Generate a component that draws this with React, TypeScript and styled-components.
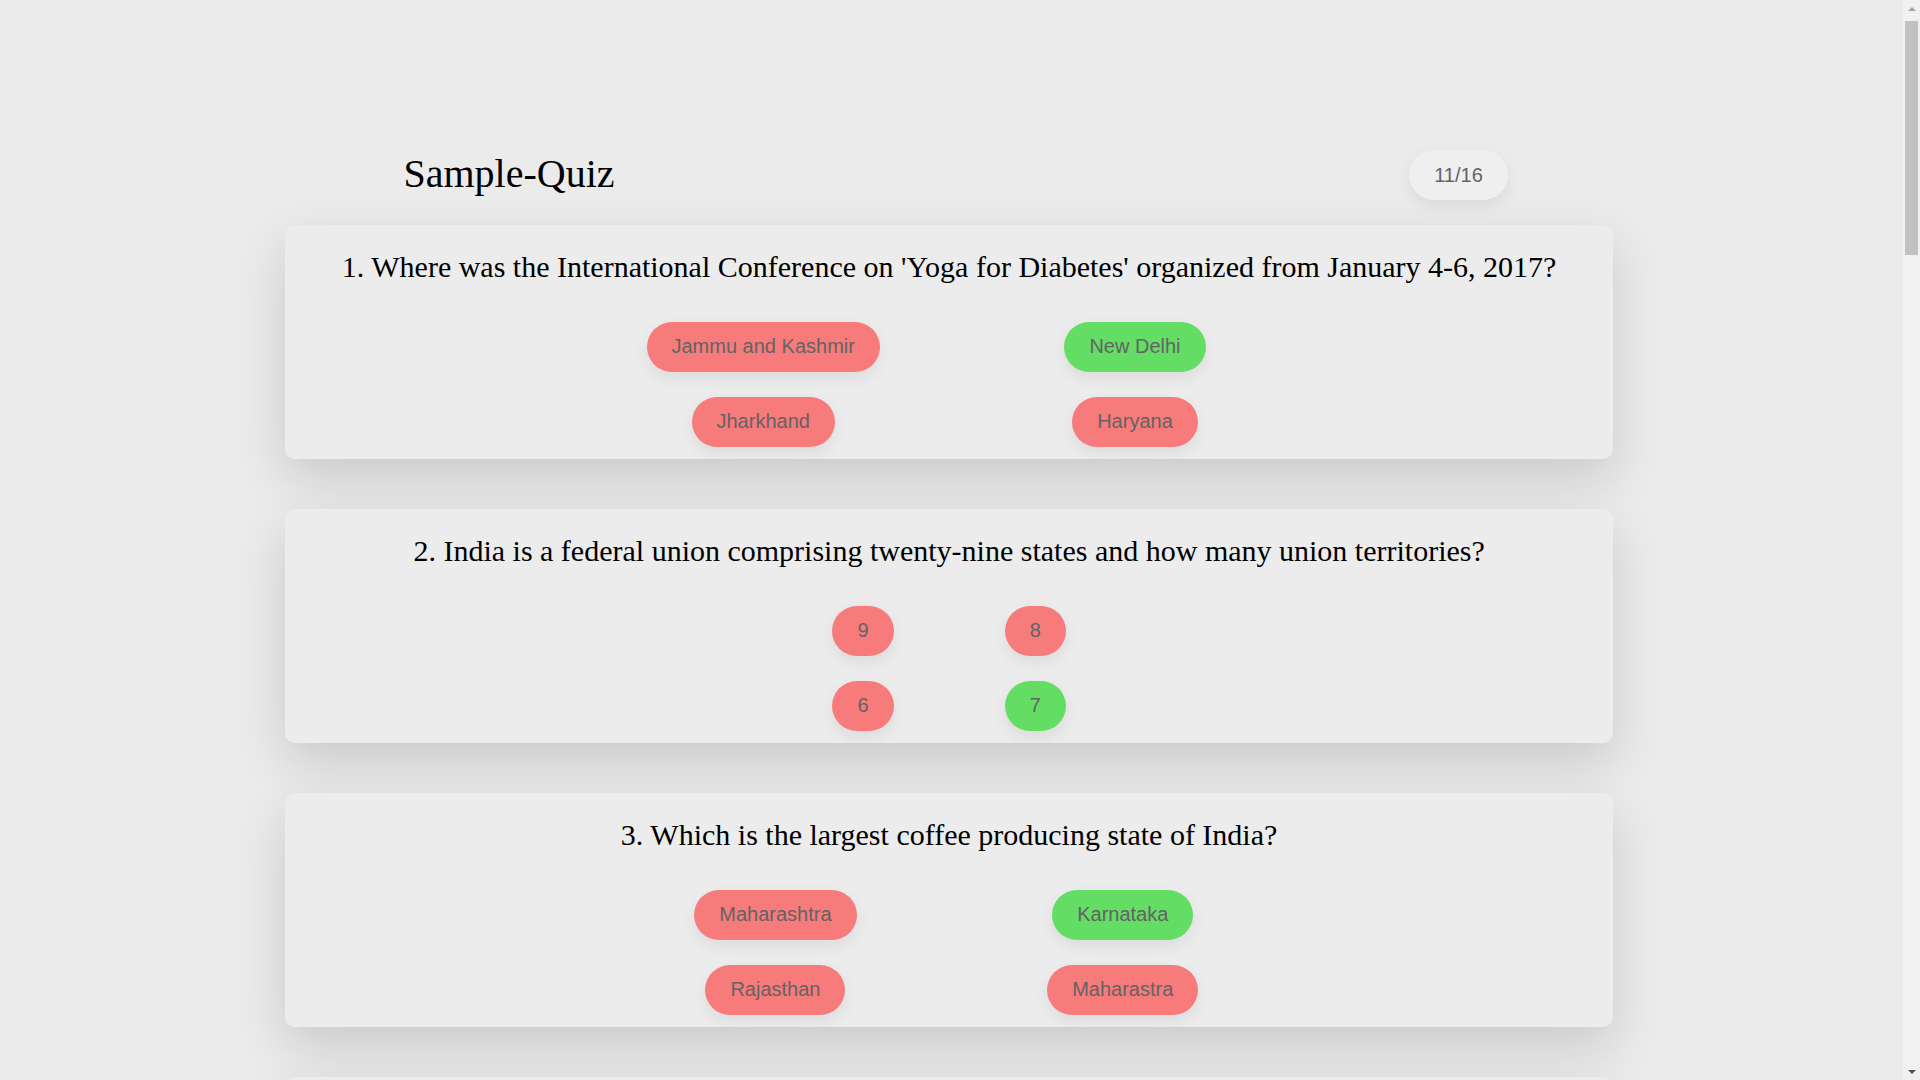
import React from "react";
import styled, { createGlobalStyle } from "styled-components";

type Question = {
  text: string;
  options: string[];
  answer: string;
};

const questions: Question[] = [
  {
    text: "Where was the International Conference on 'Yoga for Diabetes' organized from January 4-6, 2017?",
    options: ["Jammu and Kashmir", "New Delhi", "Jharkhand", "Haryana"],
    answer: "New Delhi",
  },
  {
    text: "India is a federal union comprising twenty-nine states and how many union territories?",
    options: ["9", "8", "6", "7"],
    answer: "7",
  },
  {
    text: "Which is the largest coffee producing state of India?",
    options: ["Maharashtra", "Karnataka", "Rajasthan", "Maharastra"],
    answer: "Karnataka",
  },
  {
    text: "Which is the smallest state of India by area?",
    options: ["Goa", "Sikkim", "Tripura", "Mizoram"],
    answer: "Goa",
  },
  {
    text: "Which river is known as the Ganga of the South?",
    options: ["Krishna", "Kaveri", "Godavari", "Narmada"],
    answer: "Godavari",
  },
  {
    text: "Who was the first President of India?",
    options: ["Rajendra Prasad", "S. Radhakrishnan", "Zakir Husain", "V. V. Giri"],
    answer: "Rajendra Prasad",
  },
  {
    text: "Which is the national aquatic animal of India?",
    options: ["Dolphin", "Crocodile", "Turtle", "Shark"],
    answer: "Dolphin",
  },
  {
    text: "Which state has the longest coastline in India?",
    options: ["Gujarat", "Kerala", "Tamil Nadu", "Odisha"],
    answer: "Gujarat",
  },
  {
    text: "In which year did India win its first Cricket World Cup?",
    options: ["1983", "1987", "2011", "1975"],
    answer: "1983",
  },
  {
    text: "Which city is known as the Silicon Valley of India?",
    options: ["Hyderabad", "Bengaluru", "Chennai", "Pune"],
    answer: "Bengaluru",
  },
  {
    text: "Which is the highest mountain peak in India?",
    options: ["K2", "Nanda Devi", "Kangchenjunga", "Kamet"],
    answer: "Kangchenjunga",
  },
  {
    text: "Which planet is known as the Red Planet?",
    options: ["Venus", "Mars", "Jupiter", "Mercury"],
    answer: "Mars",
  },
  {
    text: "Who wrote the national anthem of India?",
    options: ["Rabindranath Tagore", "Bankim Chandra", "Sarojini Naidu", "Iqbal"],
    answer: "Rabindranath Tagore",
  },
  {
    text: "Which is the largest desert in India?",
    options: ["Thar", "Rann of Kutch", "Spiti", "Cold Desert"],
    answer: "Thar",
  },
  {
    text: "What is the capital of Arunachal Pradesh?",
    options: ["Itanagar", "Dispur", "Shillong", "Imphal"],
    answer: "Itanagar",
  },
  {
    text: "Which Indian state is known as the Land of Five Rivers?",
    options: ["Punjab", "Haryana", "Bihar", "Assam"],
    answer: "Punjab",
  },
];

const GlobalStyle = createGlobalStyle`
  html, body {
    margin: 0;
    padding: 0;
    background: #ebebeb;
  }
  body {
    font-family: "Liberation Serif", "Times New Roman", serif;
    color: #000;
  }
`;

const Page = styled.main`
  margin-right: 17px;
  padding: 150px 0 100px;
`;

const Header = styled.header`
  box-sizing: border-box;
  width: 69.75%;
  margin-left: 15%;
  padding: 0 105px 0 118px;
  display: flex;
  align-items: center;
  justify-content: space-between;
  height: 50px;
`;

const Title = styled.h1`
  margin: 0 0 2px;
  font-family: "Liberation Serif", "Times New Roman", serif;
  font-size: 40px;
  font-weight: normal;
  line-height: 1;
  color: #000;
`;

const Pill = styled.span<{ $tone: "wrong" | "right" | "neutral" }>`
  display: inline-flex;
  align-items: center;
  justify-content: center;
  box-sizing: border-box;
  height: 50px;
  padding: 0 25px;
  border-radius: 25px;
  white-space: nowrap;
  font-family: "Liberation Sans", Arial, sans-serif;
  font-size: 20px;
  color: #636363;
  background: ${(p) =>
    p.$tone === "right" ? "#64dd64" : p.$tone === "wrong" ? "#f77b7b" : "#efefef"};
  box-shadow: 0 6px 16px rgba(0, 0, 0, 0.07);
`;

const List = styled.section`
  width: 69.75%;
  margin: 25px 0 0 15%;
  display: flex;
  flex-direction: column;
  gap: 50px;
`;

const Card = styled.article`
  background: #ececec;
  border-radius: 10px;
  padding-top: 25px;
  box-shadow: 0 20px 50px rgba(0, 0, 0, 0.14);
`;

const QuestionText = styled.h2`
  margin: 0 0 25px;
  font-family: "Liberation Serif", "Times New Roman", serif;
  font-size: 30px;
  font-weight: normal;
  line-height: normal;
  text-align: center;
  color: #000;
`;

const Options = styled.div`
  display: flex;
  flex-wrap: wrap;
  width: fit-content;
  margin: 0 auto;
`;

const OptionCell = styled.div`
  box-sizing: border-box;
  width: 50%;
  padding: 12.5px;
  display: flex;
  justify-content: center;
`;

/* Browser-style vertical scrollbar overlaid at the right edge */
const ScrollRail = styled.div`
  position: fixed;
  top: 0;
  right: 0;
  width: 17px;
  height: 100vh;
  background: #f1f1f1;
  display: flex;
  flex-direction: column;
`;

const ScrollArrow = styled.div<{ $dir: "up" | "down" }>`
  flex: 0 0 17px;
  display: flex;
  align-items: center;
  justify-content: center;
  &::before {
    content: "";
    width: 0;
    height: 0;
    border-left: 4px solid transparent;
    border-right: 4px solid transparent;
    ${(p) =>
      p.$dir === "up"
        ? "border-bottom: 4px solid #a3a3a3;"
        : "border-top: 4px solid #505050;"}
  }
`;

const ScrollTrack = styled.div`
  flex: 1;
  padding: 4px 2px 0;
`;

const ScrollThumb = styled.div`
  height: 234px;
  background: #c1c1c1;
`;

export default function App() {
  return (
    <>
      <GlobalStyle />
      <Page>
        <Header>
          <Title>Sample-Quiz</Title>
          <Pill $tone="neutral">11/16</Pill>
        </Header>
        <List>
          {questions.map((q, i) => (
            <Card key={i}>
              <QuestionText>
                {i + 1}. {q.text}
              </QuestionText>
              <Options>
                {q.options.map((o) => (
                  <OptionCell key={o}>
                    <Pill $tone={o === q.answer ? "right" : "wrong"}>{o}</Pill>
                  </OptionCell>
                ))}
              </Options>
            </Card>
          ))}
        </List>
      </Page>
      <ScrollRail aria-hidden="true">
        <ScrollArrow $dir="up" />
        <ScrollTrack>
          <ScrollThumb />
        </ScrollTrack>
        <ScrollArrow $dir="down" />
      </ScrollRail>
    </>
  );
}
